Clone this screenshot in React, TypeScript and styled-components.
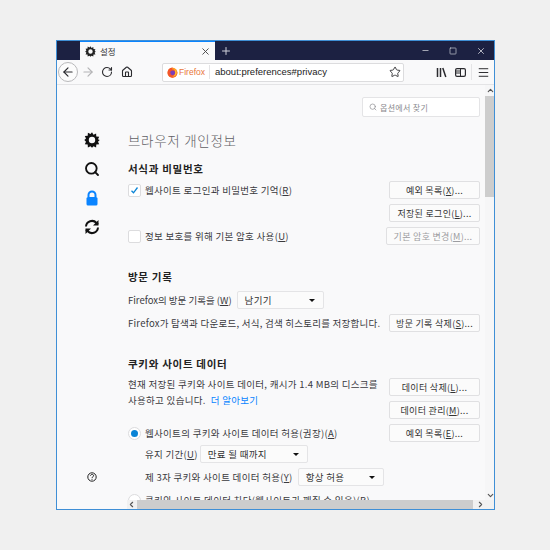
import { ReactNode } from 'react';
import styled, { createGlobalStyle } from 'styled-components';
import { ArrowLeft, ArrowRight, ChevronDown, ChevronLeft, ChevronRight, ChevronUp, Home, Menu, Minus, Plus, RotateCw, Search, Square, Star, X } from 'lucide-react';

const GlobalStyle = createGlobalStyle`
  html, body {
    margin: 0;
    background: #f0f0f0;
    font-family: "Noto Sans CJK KR", "Noto Sans", sans-serif;
  }
`;

const Page = styled.div`
  width: 550px;
  height: 550px;
  padding: 40px 0 0 56px;
  box-sizing: border-box;
`;

const Window = styled.div`
  width: 439px;
  height: 470px;
  box-sizing: border-box;
  border: 1px solid #3f8fd6;
  display: flex;
  flex-direction: column;
  background: #f9f9fa;
  overflow: hidden;
`;

const TitleBar = styled.div`
  height: 19px;
  flex: none;
  display: flex;
  align-items: stretch;
  background: #1c2142;
  color: #cfd1da;
`;

const Tab = styled.div`
  width: 135px;
  margin-left: 23px;
  padding: 0 4px 0 5px;
  box-sizing: border-box;
  border-top: 1px solid #0a84ff;
  background: #f9f9fa;
  color: #222;
  display: flex;
  align-items: center;
  gap: 4px;
  font-size: 8.5px;
`;

const TabTitle = styled.span`
  flex: 1;
  color: #333;
`;

const NewTab = styled.div`
  width: 22px;
  display: flex;
  align-items: center;
  justify-content: center;
`;

const WinControls = styled.div`
  margin-left: auto;
  display: flex;
  align-items: center;
  gap: 18px;
  padding-right: 8px;
`;

const WinSlot = styled.div`
  width: 10px;
  display: flex;
  justify-content: center;
`;

const NavBar = styled.div`
  height: 25px;
  flex: none;
  display: flex;
  align-items: center;
  background: #f9f9fa;
  border-bottom: 1px solid #e4e4e6;
  box-sizing: border-box;
  color: #2a2a2e;
`;

const BackButton = styled.div`
  width: 20px;
  height: 20px;
  margin-left: 1px;
  border: 1px solid #b9b9bb;
  border-radius: 50%;
  box-sizing: border-box;
  background: #fcfcfc;
  display: flex;
  align-items: center;
  justify-content: center;
`;

const NavIcon = styled.div<{ $w?: number }>`
  width: ${(p) => p.$w ?? 19}px;
  display: flex;
  align-items: center;
  justify-content: center;
`;

const UrlBar = styled.div`
  width: 242px;
  height: 19px;
  margin-left: 26px;
  box-sizing: border-box;
  border: 1px solid #dcdcde;
  border-radius: 2px;
  background: #fff;
  display: flex;
  align-items: center;
  padding: 0 2px 0 4px;
  font-family: "Liberation Sans", sans-serif;
  font-size: 9px;
`;

const Brand = styled.span`
  color: #e8763a;
  margin-left: 1px;
  width: 25px;
  font-size: 8.5px;
`;

const UrlText = styled.span`
  flex: 1;
  margin-left: 5px;
  padding-left: 5px;
  border-left: 1px solid #e4e4e6;
  line-height: 14px;
  color: #222;
  font-size: 9.5px;
`;

const NavRight = styled.div`
  margin-left: auto;
  display: flex;
  align-items: center;
  padding-right: 1px;
`;

const NavDivider = styled.div`
  width: 1px;
  height: 16px;
  background: #e4e4e6;
  margin: 0 1px;
`;

const Body = styled.div`
  flex: 1;
  min-height: 0;
  display: flex;
`;

const Sidebar = styled.nav`
  width: 70px;
  flex: none;
  padding: 47px 0 27px 27px;
  box-sizing: border-box;
  display: flex;
  flex-direction: column;
  align-items: flex-start;
  gap: 13px;
  color: #111;
`;

const HelpIcon = styled.div`
  margin-top: auto;
  margin-left: 3px;
  height: 10px;
  display: flex;
`;

const Pane = styled.div`
  flex: 1;
  min-width: 0;
  display: grid;
  grid-template-columns: 1fr 10px;
  grid-template-rows: 1fr 9px;
`;

const Content = styled.main`
  overflow: hidden;
  padding: 12px 5px 0 1px;
  color: #3a3a3e;
  font-size: 9.5px;
  letter-spacing: 0.3px;
`;

const SearchBox = styled.div`
  width: 118px;
  height: 20px;
  margin-left: auto;
  box-sizing: border-box;
  border: 1px solid #e4e4e6;
  border-radius: 2px;
  background: #fff;
  display: flex;
  align-items: center;
  gap: 3px;
  padding-left: 6px;
  color: #8a8a8e;
  font-size: 8px;
`;

const PageTitle = styled.h1`
  margin: 14px 0 0;
  font-size: 13.5px;
  line-height: 18px;
  font-weight: 300;
  letter-spacing: 0.7px;
  color: #606064;
`;

const SectionTitle = styled.h2<{ $top: number }>`
  margin: ${(p) => p.$top}px 0 0;
  font-size: 10.5px;
  line-height: 14px;
  font-weight: 700;
  letter-spacing: 0.7px;
  color: #222;
`;

const Row = styled.div<{ $top: number; $indent?: number }>`
  height: 18px;
  margin-top: ${(p) => p.$top}px;
  padding-left: ${(p) => p.$indent ?? 0}px;
  display: flex;
  align-items: center;
  white-space: nowrap;
`;

const SplitRow = styled.div`
  margin-top: 7px;
  display: flex;
  align-items: flex-start;
`;

const TextBlock = styled.div`
  flex: 1;
  line-height: 16px;
  margin-top: -2px;
  white-space: nowrap;
`;

const ButtonStack = styled.div`
  display: flex;
  flex-direction: column;
  gap: 5px;
`;

const Button = styled.div<{ $disabled?: boolean; $w?: number }>`
  width: ${(p) => p.$w ?? 91}px;
  height: 18px;
  margin-left: auto;
  flex: none;
  box-sizing: border-box;
  border: 1px solid #e0e0e2;
  border-radius: 2px;
  background: #fbfbfb;
  color: ${(p) => (p.$disabled ? '#9c9ca0' : '#333')};
  display: flex;
  align-items: center;
  justify-content: center;
  font-size: 9px;
`;

const Check = styled.div`
  width: 13px;
  height: 13px;
  margin-right: 4px;
  flex: none;
  box-sizing: border-box;
  border: 1px solid #dcdcde;
  border-radius: 2px;
  background: #fff;
  display: flex;
  align-items: center;
  justify-content: center;
`;

const Radio = styled.div<{ $on?: boolean }>`
  width: 13px;
  height: 13px;
  margin-right: 4px;
  flex: none;
  box-sizing: border-box;
  border: 1px solid #dcdcde;
  border-radius: 50%;
  background: #fff;
  display: flex;
  align-items: center;
  justify-content: center;
  &::after {
    content: '';
    width: 7px;
    height: 7px;
    border-radius: 50%;
    background: ${(p) => (p.$on ? '#0a84d6' : 'transparent')};
  }
`;

const Select = styled.div<{ $w: number; $left?: number }>`
  width: ${(p) => p.$w}px;
  height: 18px;
  margin-left: ${(p) => p.$left ?? 2}px;
  padding: 0 8px 0 7px;
  box-sizing: border-box;
  border: 1px solid #e4e4e6;
  border-radius: 2px;
  background: #fbfbfb;
  display: flex;
  align-items: center;
  justify-content: space-between;
  flex: none;
  color: #333;
  &::after {
    content: '';
    border: 3px solid transparent;
    border-top: 3px solid #111;
    border-bottom: 0;
  }
`;

const LearnMore = styled.span`
  color: #0a84ff;
  margin-left: 5px;
`;

const Tight = styled.span<{ $spacing: number }>`
  letter-spacing: ${(p) => p.$spacing}px;
`;

const Key = styled.span`
  text-decoration: underline;
  text-underline-offset: 1px;
`;

const VTrack = styled.div`
  background: #f6f6f7;
  display: flex;
  flex-direction: column;
  align-items: center;
  color: #555;
  padding-top: 1px;
`;

const VThumb = styled.div`
  width: 10px;
  height: 101px;
  margin-top: 1px;
  background: #cdcdcd;
`;

const HTrack = styled.div`
  background: #f1f1f1;
  display: flex;
  align-items: center;
  color: #555;
`;

const HThumb = styled.div`
  width: 336px;
  height: 9px;
  margin: 0 3px 0 1px;
  background: #cdcdcd;
`;

const Corner = styled.div`
  background: #f1f1f1;
`;

const Spring = styled.div`
  flex: 1;
`;

const GearIcon = ({ size }: { size: number }) => (
  <svg width={size} height={size} viewBox="0 0 16 16" fill="currentColor">
    <path
      fillRule="evenodd"
      d="M8 0.3l1.5 2.5 2.6-1.2.2 2.9 2.9.2-1.2 2.6L15.7 8l-1.7 1.7 1.2 2.6-2.9.2-.2 2.9-2.6-1.2L8 15.7l-1.5-1.5-2.6 1.2-.2-2.9-2.9-.2 1.2-2.6L.3 8l1.7-1.5L.8 3.9l2.9-.2.2-2.9 2.6 1.2zM8 4.8a3.2 3.2 0 100 6.4 3.2 3.2 0 000-6.4z"
    />
  </svg>
);

const LockIcon = () => (
  <svg width="16" height="16" viewBox="0 0 16 16">
    <path d="M4.5 7V5a3.5 3.5 0 017 0v2" fill="none" stroke="#0a84ff" strokeWidth="2" />
    <rect x="2.5" y="7" width="11" height="8.5" rx="1.5" fill="#0a84ff" />
  </svg>
);

const SyncIcon = () => (
  <svg width="16" height="16" viewBox="0 0 16 16" fill="none" stroke="currentColor" strokeWidth="2">
    <path d="M2 7.5A6 6 0 0 1 12.5 4l1.5 1.5" />
    <path d="M14 8.5A6 6 0 0 1 3.5 12L2 10.5" />
    <path d="M14.5 1v5.5H9" fill="currentColor" stroke="none" />
    <path d="M1.5 15V9.5H7" fill="currentColor" stroke="none" />
  </svg>
);

const QuestionIcon = () => (
  <svg width="10" height="10" viewBox="0 0 10 10" fill="none" stroke="#222">
    <circle cx="5" cy="5" r="4.2" />
    <path d="M3.4 3.8C3.6 2 6.6 2 6.6 3.7 6.6 4.9 5 4.8 5 6" />
    <path d="M5 6.8v1" />
  </svg>
);

const FirefoxLogo = () => (
  <svg width="11" height="11" viewBox="0 0 12 12">
    <circle cx="6" cy="6.3" r="5.4" fill="#ff9a1f" />
    <path d="M1 4C2 1.5 4 .6 6.5.5 5.6 1.3 5.5 2 5.8 2.6 8.8 2.6 11 4.3 11.4 6.4 11 9.5 8.8 11.7 6 11.7 3 11.7.6 9.3.6 6.3.6 5.5.7 4.7 1 4z" fill="#f2542d" />
    <circle cx="6.2" cy="6.4" r="2.7" fill="#7a3fb8" />
    <path d="M7.5 2.2C10 3 11 5 10.6 7.4 9.6 9.9 7.5 10.8 5.4 10.4 7.5 10 8.9 8.5 8.9 6.6 8.9 4.8 8.4 3.4 7.5 2.2z" fill="#ffbd2e" />
  </svg>
);

const LibraryIcon = () => (
  <svg width="13" height="13" viewBox="0 0 13 13" fill="none" stroke="#2a2a2e" strokeWidth="1.5">
    <path d="M2.5 2v9M5.5 2v9" />
    <path d="M7.8 2l3 9" />
  </svg>
);

const SidebarIcon = () => (
  <svg width="13" height="13" viewBox="0 0 13 13" fill="none" stroke="#2a2a2e" strokeWidth="1.2">
    <rect x="1.6" y="2.6" width="9.8" height="7.8" rx="1.4" />
    <path d="M6.5 2.6v7.8M2 5h4M2 7h4" strokeWidth="1" />
  </svg>
);

const Option = ({ children }: { children: ReactNode }) => <span>{children}</span>;

export default function App() {
  return (
    <Page>
      <GlobalStyle />
      <Window>
        <TitleBar>
          <Tab>
            <GearIcon size={11} />
            <TabTitle>설정</TabTitle>
            <X size={11} color="#444" />
          </Tab>
          <NewTab>
            <Plus size={12} />
          </NewTab>
          <WinControls>
            <WinSlot><Minus size={9} /></WinSlot>
            <WinSlot><Square size={8} /></WinSlot>
            <WinSlot><X size={10} /></WinSlot>
          </WinControls>
        </TitleBar>
        <NavBar>
          <BackButton><ArrowLeft size={14} /></BackButton>
          <NavIcon><ArrowRight size={14} color="#b4b4b6" /></NavIcon>
          <NavIcon $w={20}><RotateCw size={12} strokeWidth={2.2} /></NavIcon>
          <NavIcon><Home size={12} strokeWidth={2.2} /></NavIcon>
          <UrlBar>
            <FirefoxLogo />
            <Brand>Firefox</Brand>
            <UrlText>about:preferences#privacy</UrlText>
            <Star size={12} strokeWidth={1.8} />
          </UrlBar>
          <NavRight>
            <NavIcon><LibraryIcon /></NavIcon>
            <NavIcon><SidebarIcon /></NavIcon>
            <NavDivider />
            <NavIcon $w={20}><Menu size={13} strokeWidth={1.8} /></NavIcon>
          </NavRight>
        </NavBar>
        <Body>
          <Sidebar>
            <GearIcon size={16} />
            <Search size={16} strokeWidth={2.8} />
            <LockIcon />
            <SyncIcon />
            <HelpIcon><QuestionIcon /></HelpIcon>
          </Sidebar>
          <Pane>
            <Content>
              <SearchBox>
                <Search size={8} />
                옵션에서 찾기
              </SearchBox>
              <PageTitle>브라우저 개인정보</PageTitle>
              <SectionTitle $top={13}>서식과 비밀번호</SectionTitle>
              <Row $top={5}>
                <Check>
                  <svg width="9" height="9" viewBox="0 0 9 9" fill="none" stroke="#0a84d6" strokeWidth="1.3">
                    <path d="M1.5 4.8l2 2L7.5 1.5" />
                  </svg>
                </Check>
                <Option>웹사이트 로그인과 비밀번호 기억(<Key>R</Key>)</Option>
                <Button>예외 목록(<Key>X</Key>)...</Button>
              </Row>
              <Row $top={5}>
                <Spring />
                <Button>저장된 로그인(<Key>L</Key>)...</Button>
              </Row>
              <Row $top={5}>
                <Check />
                <Option>정보 보호를 위해 기본 암호 사용(<Key>U</Key>)</Option>
                <Button $disabled $w={94}>기본 암호 변경(<Key>M</Key>)...</Button>
              </Row>
              <SectionTitle $top={25}>방문 기록</SectionTitle>
              <Row $top={7}>
                <Tight $spacing={0}>Firefox의 방문 기록을 (<Key>W</Key>)</Tight>
                <Select $w={87} $left={5}>남기기</Select>
              </Row>
              <Row $top={5}>
                <Tight $spacing={0.25}>Firefox가 탐색과 다운로드, 서식, 검색 히스토리를 저장합니다.</Tight>
                <Button>방문 기록 삭제(<Key>S</Key>)...</Button>
              </Row>
              <SectionTitle $top={25}>쿠키와 사이트 데이터</SectionTitle>
              <SplitRow>
                <TextBlock>
                  현재 저장된 쿠키와 사이트 데이터, 캐시가 1.4 MB의 디스크를
                  <br />
                  사용하고 있습니다.<LearnMore>더 알아보기</LearnMore>
                </TextBlock>
                <ButtonStack>
                  <Button>데이터 삭제(<Key>L</Key>)...</Button>
                  <Button>데이터 관리(<Key>M</Key>)...</Button>
                </ButtonStack>
              </SplitRow>
              <Row $top={5}>
                <Radio $on />
                <Option>웹사이트의 쿠키와 사이트 데이터 허용(권장)(<Key>A</Key>)</Option>
                <Button>예외 목록(<Key>E</Key>)...</Button>
              </Row>
              <Row $top={3} $indent={17}>
                <Option>유지 기간(<Key>U</Key>)</Option>
                <Select $w={108}>만료 될 때까지</Select>
              </Row>
              <Row $top={5} $indent={17}>
                <Option>제 3자 쿠키와 사이트 데이터 허용(<Key>Y</Key>)</Option>
                <Select $w={86} $left={5}>항상 허용</Select>
              </Row>
              <Row $top={5}>
                <Radio />
                <Option>쿠키와 사이트 데이터 차단(웹사이트가 깨질 수 있음)(B)</Option>
              </Row>
            </Content>
            <VTrack>
              <ChevronUp size={9} strokeWidth={3} />
              <VThumb />
              <Spring />
              <ChevronDown size={9} strokeWidth={3} />
            </VTrack>
            <HTrack>
              <ChevronLeft size={9} strokeWidth={3} />
              <HThumb />
              <ChevronRight size={9} strokeWidth={3} />
            </HTrack>
            <Corner />
          </Pane>
        </Body>
      </Window>
    </Page>
  );
}
